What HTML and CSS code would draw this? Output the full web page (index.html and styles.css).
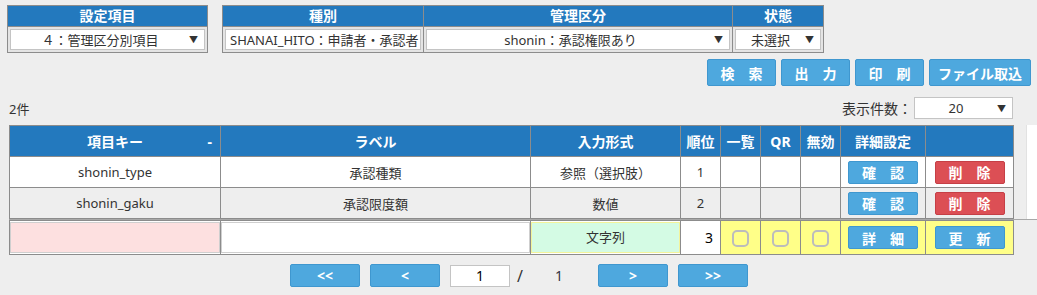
FILE: index.html
```html
<!DOCTYPE html>
<html lang="ja">
<head>
    <meta charset="UTF-8">
    <meta name="viewport" content="width=device-width, initial-scale=1.0">
    <title>管理区分別項目</title>
    <link rel="stylesheet" href="styles.css">
</head>
<body>
    <div class="filters">
        <table class="filter f1">
            <tr><th>設定項目</th></tr>
            <tr><td><div class="sel"><span class="sel-text">４：管理区分別項目</span><span class="arrow">▼</span></div></td></tr>
        </table>
        <table class="filter f2">
            <tr><th class="c-kind">種別</th><th class="c-kanri">管理区分</th><th class="c-state">状態</th></tr>
            <tr>
                <td><div class="sel sel-left"><span class="sel-text clip">SHANAI_HITO：申請者・承認者</span></div></td>
                <td><div class="sel"><span class="sel-text">shonin：承認権限あり</span><span class="arrow">▼</span></div></td>
                <td><div class="sel"><span class="sel-text">未選択</span><span class="arrow">▼</span></div></td>
            </tr>
        </table>
    </div>

    <div class="actions">
        <button class="btn">検　索</button>
        <button class="btn">出　力</button>
        <button class="btn">印　刷</button>
        <button class="btn wide">ファイル取込</button>
    </div>

    <div class="info">
        <span class="count">2件</span>
        <span class="per-page">表示件数：<span class="sel small"><span class="sel-text">20</span><span class="arrow">▼</span></span></span>
    </div>

    <div class="grid-body">
        <table class="grid">
            <colgroup>
                <col class="w-key"><col class="w-label"><col class="w-type"><col class="w-sm"><col class="w-sm"><col class="w-sm"><col class="w-sm"><col class="w-detail"><col class="w-act">
            </colgroup>
            <tr class="head">
                <th class="sort">項目キー<span class="sort-mark">-</span></th>
                <th>ラベル</th>
                <th>入力形式</th>
                <th>順位</th>
                <th>一覧</th>
                <th>QR</th>
                <th>無効</th>
                <th>詳細設定</th>
                <th></th>
            </tr>
            <tr class="row odd">
                <td>shonin_type</td>
                <td>承認種類</td>
                <td>参照（選択肢）</td>
                <td>1</td>
                <td></td><td></td><td></td>
                <td><button class="cell-btn">確　認</button></td>
                <td><button class="cell-btn red">削　除</button></td>
            </tr>
            <tr class="row even">
                <td>shonin_gaku</td>
                <td>承認限度額</td>
                <td>数値</td>
                <td>2</td>
                <td></td><td></td><td></td>
                <td><button class="cell-btn">確　認</button></td>
                <td><button class="cell-btn red">削　除</button></td>
            </tr>
        </table>
        <div class="gutter"></div>
    </div>

    <div class="grid-foot">
        <table class="grid new-row">
            <colgroup>
                <col class="w-key"><col class="w-label"><col class="w-type"><col class="w-sm"><col class="w-sm"><col class="w-sm"><col class="w-sm"><col class="w-detail"><col class="w-act">
            </colgroup>
            <tr>
                <td class="in"><div class="field pink"></div></td>
                <td class="in"><div class="field"></div></td>
                <td class="in"><div class="field green">文字列</div></td>
                <td class="in"><div class="field num">3</div></td>
                <td class="yel"><span class="check"></span></td>
                <td class="yel"><span class="check"></span></td>
                <td class="yel"><span class="check"></span></td>
                <td class="yel"><button class="cell-btn">詳　細</button></td>
                <td class="yel"><button class="cell-btn">更　新</button></td>
            </tr>
        </table>
    </div>

    <div class="pager">
        <button class="pg-btn">&lt;&lt;</button>
        <button class="pg-btn">&lt;</button>
        <span class="pg-input">1</span>
        <span class="pg-slash">/</span>
        <span class="pg-total">1</span>
        <button class="pg-btn">&gt;</button>
        <button class="pg-btn">&gt;&gt;</button>
    </div>
</body>
</html>
```

FILE: styles.css
```css
body { margin: 0; background-color: #eeeeee; font-family: "Noto Sans", "Noto Sans CJK JP", sans-serif; font-size: 13px; color: #333; }

/* filter panels */
.filters { display: flex; gap: 14px; padding: 5px 0 0 7px; }
.filter { border-collapse: collapse; border: 1px solid #8c8c8c; background-color: #e4e4e4; }
.filter th { background-color: #2379be; color: #fff; font-size: 14px; font-weight: bold; height: 20px; padding: 0; border: 1px solid #8c8c8c; line-height: 20px; }
.filter td { padding: 2px 2px; border: 1px solid #8c8c8c; height: 20px; }
.f1 { width: 201px; }
.c-kind { width: 200px; }
.c-kanri { width: 308px; }
.c-state { width: 90px; }
.sel { display: flex; align-items: center; height: 19px; background-color: #fff; border: 1px solid #c4c4c4; padding: 0 6px; font-size: 13px; color: #333; }
.sel-text { flex: 1; text-align: center; white-space: nowrap; }
.sel-left .sel-text { text-align: left; }
.clip { overflow: hidden; }
.sel-left { padding: 0 0 0 4px; overflow: hidden; }
.arrow { font-size: 9px; margin-left: 6px; color: #333; }

/* action buttons */
.actions { display: flex; justify-content: flex-end; gap: 5px; padding: 6px 6px 0 0; }
.btn { width: 69px; height: 27px; background-color: #4ea8de; border: 1px solid #3f97cf; border-radius: 2px; color: #fff; font-family: inherit; font-size: 14px; font-weight: bold; padding: 0; }
.wide { width: 102px; }

.info { display: flex; justify-content: space-between; align-items: center; padding: 11px 24px 0 9px; height: 22px; }
.count { font-size: 13px; }
.per-page { display: flex; align-items: center; font-size: 14px; }
.sel.small { width: 85px; height: 20px; margin-left: 2px; }

/* grid */
.grid-body { display: flex; justify-content: space-between; padding: 6px 0 0 9px; }
.grid { border-collapse: collapse; table-layout: fixed; width: 1004px; }
.w-key { width: 211px; }
.w-label { width: 310px; }
.w-type { width: 150px; }
.w-sm { width: 40px; }
.w-detail { width: 85px; }
.w-act { width: 88px; }
.grid th { background-color: #2379be; color: #fff; font-size: 14px; font-weight: bold; height: 30px; padding: 0; border: 1px solid #8c8c8c; text-align: center; }
.sort { position: relative; }
.sort-mark { position: absolute; right: 8px; top: 6px; }
.grid td { border: 1px solid #8c8c8c; height: 30px; padding: 0; text-align: center; }
.odd td { background-color: #fff; }
.even td { background-color: #eeeeee; }
.gutter { width: 10px; height: 94px; background-color: #fff; border-left: 1px solid #e2e2e2; }

.cell-btn { width: 70px; height: 23px; background-color: #4ea8de; border: 1px solid #3f97cf; border-radius: 2px; color: #fff; font-family: inherit; font-size: 14px; font-weight: bold; padding: 0; vertical-align: middle; }
.cell-btn.red { background-color: #dc4f55; border-color: #c53f46; }

/* new row */
.grid-foot { margin-left: 9px; border-top: 1px solid #a8a8a8; }
.new-row td { height: 33px; }
.new-row .in { background-color: #fff; }
.field { height: 31px; margin: 0; box-sizing: border-box; border: 1px solid #cfcfcf; background-color: #fff; line-height: 29px; }
.pink { background-color: #fde0e0; }
.green { background-color: #d4fbe4; border-color: #f3f39a; font-size: 13px; }
.num { text-align: right; padding-right: 6px; color: #000; font-size: 14px; border-color: #fff; }
.yel { background-color: #ffff88; }
.check { display: inline-block; width: 13px; height: 13px; border: 2px solid #bcbcbc; border-radius: 5px; vertical-align: middle; }

/* pager */
.pager { display: flex; align-items: center; padding: 9px 0 0 290px; }
.pg-btn { width: 70px; height: 23px; margin-right: 10px; background-color: #4ea8de; border: 1px solid #3f97cf; border-radius: 2px; color: #fff; font-family: inherit; font-size: 14px; font-weight: bold; padding: 0; }
.pg-input { width: 58px; height: 20px; background-color: #fff; border: 1px solid #c4c4c4; text-align: center; color: #000; font-size: 14px; line-height: 20px; }
.pg-slash { margin-left: 7px; font-size: 16px; }
.pg-total { margin-left: 32px; width: 43px; color: #334; font-size: 14px; }
```
